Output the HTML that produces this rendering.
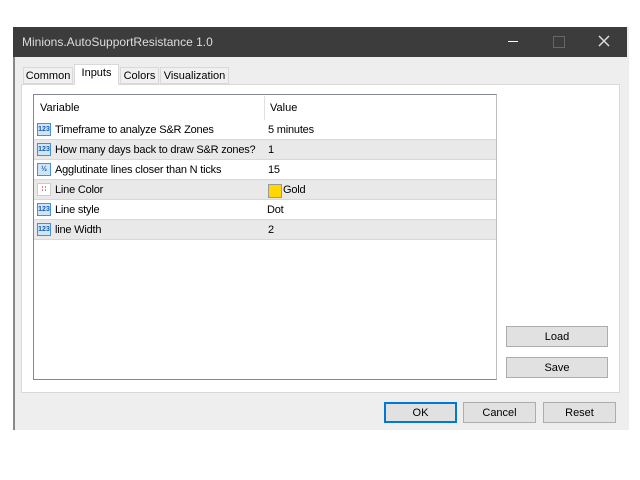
<!DOCTYPE html><html><head><style>
body{margin:0;width:640px;height:480px;background:#fff;position:relative;font-family:"Liberation Sans",sans-serif;font-size:11px;color:#000;overflow:hidden}
.a{position:absolute}
.btn{position:absolute;background:#e1e1e1;border:1px solid #adadad;box-sizing:border-box;text-align:center;line-height:20px;font-size:11px}
.row{position:absolute;left:34px;width:462px;height:20px;border-bottom:1px solid #d8d8d8;box-sizing:border-box;letter-spacing:-0.2px}
.row span{position:absolute;top:4px}
.ic{position:absolute;left:3px;top:3px;width:14px;height:13px;background:#cfe4f7;border:1px solid #4a90d9;box-sizing:border-box;font-size:7px;color:#1a5fb0;font-weight:bold;line-height:11px;text-align:center;letter-spacing:0}
</style></head><body>
<div class="a" style="left:13px;top:27px;width:614px;height:403px;background:#eeeeee;border-left:2px solid #888"></div>
<div class="a" style="left:13px;top:27px;width:614px;height:30px;background:#3c3c3c;color:#ddd;font-size:12px;line-height:30px;padding-left:9px;box-sizing:border-box">Minions.AutoSupportResistance 1.0</div>
<div class="a" style="left:508px;top:41px;width:10px;height:1px;background:#fff"></div>
<div class="a" style="left:553px;top:36px;width:10px;height:10px;border:1px solid #666"></div>
<svg class="a" style="left:598px;top:35px" width="12" height="12"><path d="M1 1L11 11M11 1L1 11" stroke="#ddd" stroke-width="1.5"/></svg>
<div class="a" style="left:21px;top:84px;width:599px;height:309px;background:#fff;border:1px solid #d9d9d9;box-sizing:border-box"></div>
<div class="a" style="left:23px;top:67px;width:50px;height:17px;background:#f0f0f0;border:1px solid #d9d9d9;box-sizing:border-box;text-align:center;line-height:16px">Common</div>
<div class="a" style="left:74px;top:64px;width:45px;height:21px;background:#fff;border:1px solid #d9d9d9;border-bottom:none;box-sizing:border-box;text-align:center;line-height:17px">Inputs</div>
<div class="a" style="left:120px;top:67px;width:39px;height:17px;background:#f0f0f0;border:1px solid #d9d9d9;box-sizing:border-box;text-align:center;line-height:16px">Colors</div>
<div class="a" style="left:160px;top:67px;width:69px;height:17px;background:#f0f0f0;border:1px solid #d9d9d9;box-sizing:border-box;text-align:center;line-height:16px">Visualization</div>
<div class="a" style="left:33px;top:94px;width:464px;height:286px;border:1px solid #828790;border-right-color:#c0c0c0;box-sizing:border-box;background:#fff"></div>
<div class="a" style="left:264px;top:96px;width:1px;height:144px;background:#e0e0e0"></div>
<div class="a" style="left:40px;top:102px">Variable</div>
<div class="a" style="left:270px;top:102px">Value</div>
<div class="row" style="top:120px;background:#fff"><div class="ic">123</div><span style="left:21px">Timeframe to analyze S&amp;R Zones</span><span style="left:234px">5 minutes</span></div>
<div class="row" style="top:140px;background:#e9e9e9"><div class="ic">123</div><span style="left:21px">How many days back to draw S&amp;R zones?</span><span style="left:234px">1</span></div>
<div class="row" style="top:160px;background:#fff"><div class="ic">½</div><span style="left:21px">Agglutinate lines closer than N ticks</span><span style="left:234px">15</span></div>
<div class="row" style="top:180px;background:#e9e9e9"><div class="ic" style="background:#fff;border-color:#ccc;color:#c33">∷</div><span style="left:21px">Line Color</span><div class="a" style="left:234px;top:4px;width:12px;height:12px;background:#ffd700;border:1px solid #999"></div><span style="left:249px">Gold</span></div>
<div class="row" style="top:200px;background:#fff"><div class="ic">123</div><span style="left:21px">Line style</span><span style="left:233px">Dot</span></div>
<div class="row" style="top:220px;background:#e9e9e9"><div class="ic">123</div><span style="left:21px">line Width</span><span style="left:234px">2</span></div>
<div class="btn" style="left:506px;top:326px;width:102px;height:21px">Load</div>
<div class="btn" style="left:506px;top:357px;width:102px;height:21px">Save</div>
<div class="btn" style="left:384px;top:402px;width:73px;height:21px;border:2px solid #0078d7;line-height:18px">OK</div>
<div class="btn" style="left:463px;top:402px;width:73px;height:21px">Cancel</div>
<div class="btn" style="left:543px;top:402px;width:73px;height:21px">Reset</div>
</body></html>
